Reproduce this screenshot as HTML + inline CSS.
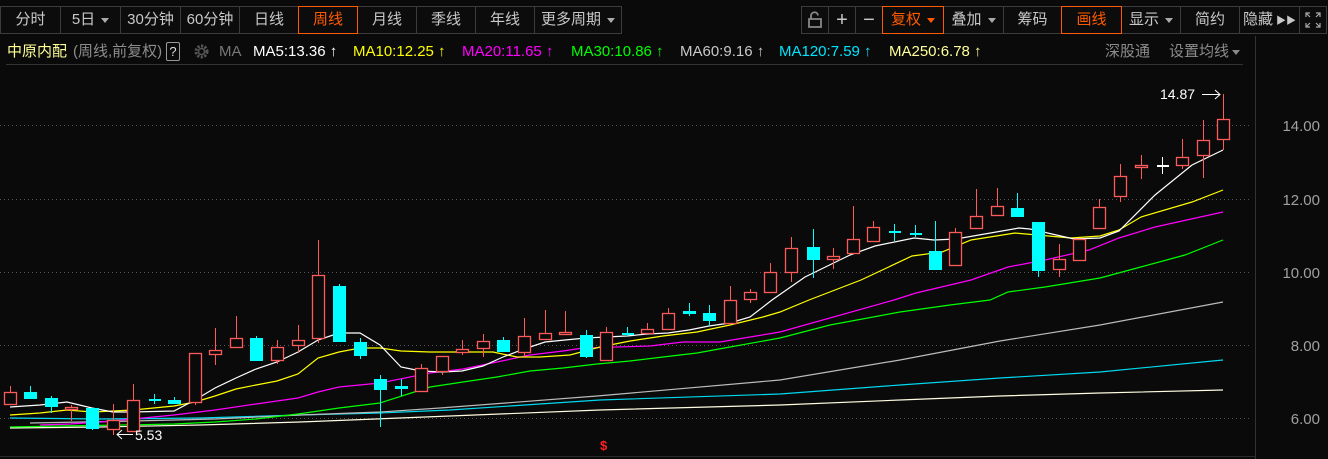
<!DOCTYPE html>
<html><head><meta charset="utf-8"><style>
*{margin:0;padding:0;box-sizing:border-box}
body{width:1328px;height:459px;background:#0a0a0a;overflow:hidden;position:relative;font-family:"Liberation Sans","Noto Sans CJK SC",sans-serif;}
.tb{position:absolute;top:6px;height:28px;border:1px solid #3c3c3c;color:#c8c8c8;font-size:15px;line-height:26px;text-align:center;background:#0c0c0c}
.sel{border-color:#ff5a00;color:#ff5a00;z-index:2}
.tri{display:inline-block;width:0;height:0;border-left:4px solid transparent;border-right:4px solid transparent;border-top:5px solid #aaa;vertical-align:middle;margin-left:6px}
.sel .tri{border-top-color:#ff5a00}
.t{position:absolute;top:43px;font-size:15px;line-height:18px;white-space:nowrap}
</style></head><body>
<div class="tb" style="left:0;width:61px">分时</div>
<div class="tb" style="left:60px;width:61px">5日<span class="tri"></span></div>
<div class="tb" style="left:120px;width:61px">30分钟</div>
<div class="tb" style="left:180px;width:60px">60分钟</div>
<div class="tb" style="left:239px;width:60px">日线</div>
<div class="tb" style="left:357px;width:60px">月线</div>
<div class="tb" style="left:416px;width:60px">季线</div>
<div class="tb" style="left:475px;width:60px">年线</div>
<div class="tb" style="left:534px;width:88px">更多周期<span class="tri"></span></div>
<div class="tb sel" style="left:298px;width:60px">周线</div>

<div class="tb" style="left:801px;width:28px"><svg width="20" height="20" viewBox="0 0 20 20" style="margin-top:3px"><path d="M4 9h12v8H4z M6 9V6a3.5 3.5 0 0 1 7 -0.5" fill="none" stroke="#888" stroke-width="1.8"/></svg></div>
<div class="tb" style="left:828px;width:28px;font-size:20px">+</div>
<div class="tb" style="left:855px;width:28px;font-size:20px">−</div>
<div class="tb" style="left:943px;width:61px">叠加<span class="tri"></span></div>
<div class="tb" style="left:1003px;width:59px">筹码</div>
<div class="tb" style="left:1121px;width:60px">显示<span class="tri"></span></div>
<div class="tb" style="left:1180px;width:60px">简约</div>
<div class="tb" style="left:1239px;width:61px">隐藏<span style="font-size:10px;margin-left:3px">▶▶</span></div>
<div class="tb" style="left:1299px;width:28px"><svg width="16" height="16" viewBox="0 0 16 16" style="margin-top:5px"><path d="M1 5V1h4M1 1l4 4M11 1h4v4M15 1l-4 4M1 11v4h4M1 15l4-4M15 11v4h-4M15 15l-4-4" fill="none" stroke="#aaa" stroke-width="1.2"/></svg></div>
<div class="tb sel" style="left:882px;width:62px">复权<span class="tri"></span></div>
<div class="tb sel" style="left:1061px;width:61px">画线</div>

<div class="t" style="left:7px;color:#ffff99">中原内配</div>
<div class="t" style="left:73px;color:#8c8c8c">(周线,前复权)</div>
<div style="position:absolute;left:166px;top:42px;width:14px;height:19px;border:1px solid #999;color:#ddd;font-size:13px;text-align:center;line-height:17px;border-radius:2px">?</div>
<svg style="position:absolute;left:193px;top:43px" width="17" height="17" viewBox="0 0 17 17"><circle cx="8.5" cy="8.5" r="5.5" fill="none" stroke="#555" stroke-width="3" stroke-dasharray="2.2 1.4"/><circle cx="8.5" cy="8.5" r="3" fill="none" stroke="#555" stroke-width="1.5"/></svg>
<div class="t" style="left:219px;color:#777">MA</div>
<div class="t" style="left:253px;color:#fff">MA5:13.36 ↑</div>
<div class="t" style="left:353px;color:#ffff00">MA10:12.25 ↑</div>
<div class="t" style="left:462px;color:#ff00ff">MA20:11.65 ↑</div>
<div class="t" style="left:571px;color:#00ff00">MA30:10.86 ↑</div>
<div class="t" style="left:680px;color:#c8c8c8">MA60:9.16 ↑</div>
<div class="t" style="left:779px;color:#00e5ff">MA120:7.59 ↑</div>
<div class="t" style="left:889px;color:#ffff99">MA250:6.78 ↑</div>
<div class="t" style="left:1105px;color:#8c8c8c">深股通</div>
<div class="t" style="left:1169px;color:#8c8c8c">设置均线<span class="tri" style="margin-left:3px;border-top-color:#888"></span></div>

<svg style="position:absolute;left:0;top:0" width="1328" height="459">
<line x1="6" y1="64.5" x2="1243" y2="64.5" stroke="#333"/>
<line x1="1255.5" y1="36" x2="1255.5" y2="459" stroke="#333"/>
<line x1="0" y1="456.5" x2="1255" y2="456.5" stroke="#2a2a2a"/>
<g stroke="#555" stroke-dasharray="1 3">
<line x1="0" y1="125.5" x2="1252" y2="125.5"/><line x1="0" y1="199.5" x2="1252" y2="199.5"/><line x1="0" y1="272.5" x2="1252" y2="272.5"/><line x1="0" y1="345.5" x2="1252" y2="345.5"/><line x1="0" y1="418.5" x2="1252" y2="418.5"/>
</g>
<g fill="#a0a0a0" font-size="15" font-family="Liberation Sans" text-anchor="end">
<text x="1320" y="131">14.00</text><text x="1320" y="205">12.00</text><text x="1320" y="278">10.00</text><text x="1320" y="351">8.00</text><text x="1320" y="424">6.00</text>
</g>
<g fill="none" stroke-width="1.2">
<polyline stroke="#fffde0" points="10,428 100,427 200,425 300,422 400,418 500,414 600,410 780,405 900,400 1000,396 1100,393 1223,390"/>
<polyline stroke="#00d8f0" points="10,418 100,419 200,418 300,415 380,413 450,410 600,400 780,394 900,385 1000,378 1100,372 1223,360"/>
<polyline stroke="#bbb" points="30,423 133,421 215,419 300,415 380,412 440,408 597,396 780,380 900,360 1000,341 1100,325 1223,302"/>
<polyline stroke="#00ff00" points="10,427 60,426 123,425 174,424 215,422 256,419 298,414 339,408 380,403 430,387 463,382 497,377 530,371 563,368 597,364 630,361 663,357 697,353 730,347 780,338 830,325 900,312 950,305 990,300 1008,292 1045,287 1100,278 1137,268 1185,255 1223,240"/>
<polyline stroke="#ff00ff" points="40,425 70,424 100,422 133,419 174,415 215,410 256,404 298,398 318,392 339,387 380,383 430,373 463,369 497,362 530,355 563,351 583,348 650,346 683,342 720,342 750,337 780,332 894,300 916,293 971,280 1008,267 1045,260 1089,250 1119,238 1155,227 1223,212"/>
<polyline stroke="#ffff00" points="10,415 40,413 67,410 92,412 113,411 133,410 174,406 195,402 215,396 236,389 256,385 277,381 298,374 318,358 339,352 360,348 380,348 401,351 430,352 493,352 517,357 540,357 570,355 600,347 630,341 663,336 697,332 730,325 763,317 780,312 809,300 861,280 912,256 942,252 971,240 1015,233 1071,238 1100,236 1119,230 1141,217 1192,202 1223,190"/>
<polyline stroke="#fff" points="10,407 40,405 67,402 92,408 113,412 133,412 174,411 195,400 215,388 236,378 256,369 277,362 298,352 318,340 339,333 360,333 380,345 401,367 421,371 442,372 462,371 483,366 503,357 524,349 545,342 565,340 586,338 606,337 627,336 647,334 668,333 689,330 709,326 730,323 750,317 772,300 805,277 850,255 875,246 914,238 934,240 956,239 1019,228 1030,229 1074,239 1100,238 1119,231 1155,195 1192,165 1223,150"/>
</g>
<g id="c"></g>
<text x="1160" y="99" fill="#fff" font-size="14" font-family="Liberation Sans">14.87</text>
<path d="M1202 94.5h18M1215 90l5 4.5-5 4.5" stroke="#fff" fill="none"/>
<text x="135" y="440" fill="#fff" font-size="14" font-family="Liberation Sans">5.53</text>
<path d="M117 434.5h16M122 430l-5 4.5 5 4.5" stroke="#fff" fill="none"/>
<text x="600" y="450" fill="#ff2020" font-size="13" font-weight="bold" font-family="Liberation Sans">$</text>
</svg>
<script>
var d=[
[10,392,404,386,404,1],[30,392,399,386,399,0],[51,398,407,396,413,0],[71,407,409,405,421,1],[92,408,429,408,430,0],[113,420,429,404,435,1],[133,400,431,384,431,1],[154,399,399,394,404,0],[174,400,404,397,404,0],[195,353,402,353,405,1],[215,350,354,328,365,1],[236,338,347,316,347,1],[256,338,361,336,361,0],[277,347,360,340,364,1],[298,340,345,325,353,1],[318,275,338,240,343,1],[339,286,342,284,342,0],[360,342,356,338,359,0],[380,379,390,375,427,0],[401,386,389,379,396,0],[421,368,391,364,391,1],
[442,356,371,356,375,1],[462,349,352,340,355,1],[483,341,348,334,357,1],[503,340,352,337,352,0],[524,336,352,318,357,1],[545,333,339,310,339,1],[565,332,334,311,334,1],[586,335,357,330,358,0],[606,332,360,327,360,1],[627,333,333,327,336,0],[647,329,333,323,333,1],[668,313,329,308,329,1],[689,311,314,303,316,0],[709,313,321,305,326,0],[730,300,323,286,323,1],[750,292,299,289,303,1],[770,272,292,263,292,1],
[791,248,272,237,282,1],[813,247,260,229,278,0],[833,256,259,248,269,1],[853,239,253,206,253,1],[873,227,241,221,241,1],[894,231,231,224,241,0],[915,233,233,225,237,0],[935,251,270,221,270,0],[955,232,265,228,265,1],[976,216,228,189,228,1],[997,206,215,188,215,1],[1017,208,217,193,217,0],[1038,222,271,222,277,0],[1059,259,269,244,277,1],[1079,239,260,239,260,1],[1099,207,228,199,228,1],[1120,176,196,164,202,1],[1141,165,167,155,179,1],[1162,165,165,157,174,2],[1182,157,165,139,169,1],[1203,140,155,120,178,1],[1223,119,139,94,150,1]];
var s='';
d.forEach(function(c){var x=c[0],a=c[1],b=c[2],h=c[3],l=c[4],t=c[5];
var col=t==1?'#ff5a5a':t==0?'#00ffff':'#ffffff';
s+='<line x1="'+(x+.5)+'" y1="'+h+'" x2="'+(x+.5)+'" y2="'+l+'" stroke="'+col+'"/>';
if(b-a<2){s+='<rect x="'+(x-5)+'" y="'+a+'" width="12" height="'+Math.max(2,b-a+1)+'" fill="'+col+'"/>';}
else if(t==1){s+='<rect x="'+(x-5.5)+'" y="'+(a+.5)+'" width="12" height="'+(b-a)+'" fill="#0a0a0a" stroke="'+col+'" stroke-width="1.3"/>';}
else{s+='<rect x="'+(x-6)+'" y="'+a+'" width="13" height="'+(b-a)+'" fill="'+col+'"/>';}
});
document.getElementById('c').innerHTML=s;
</script>
</body></html>
